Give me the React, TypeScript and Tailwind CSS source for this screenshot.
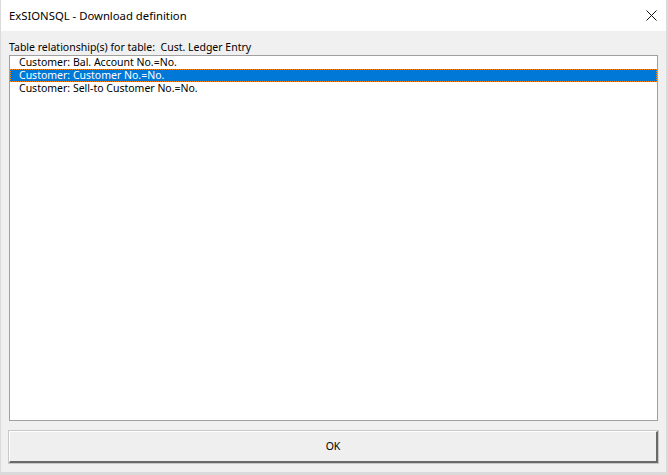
import React from 'react';

const rows = [
  'Customer: Bal. Account No.=No.',
  'Customer: Customer No.=No.',
  'Customer: Sell-to Customer No.=No.',
];

export default function App() {
  const selected = 1;

  return (
    <div
      className="w-[668px] h-[475px] flex flex-col bg-[#f0f0f0] border-l border-r-2 border-b-[3px] border-[#dadada] text-[10.5px] text-black overflow-hidden"
      style={{ fontFamily: '"Noto Sans", "Segoe UI", sans-serif' }}
    >
      {/* title bar */}
      <div className="h-[31px] shrink-0 bg-white flex items-center justify-between pl-[8px] pr-[9px]">
        <span className="text-[11.3px] leading-none pt-[1px]">ExSIONSQL - Download definition</span>
        <svg width="11" height="11" viewBox="0 0 11 11">
          <path d="M0.5 0.5 L10.5 10.5 M10.5 0.5 L0.5 10.5" stroke="#111" strokeWidth="1" />
        </svg>
      </div>

      <div className="flex-1 flex flex-col px-[8px] pt-[8px] pb-[9px]">
        <div className="h-[16px] leading-[16px] whitespace-pre">
          Table relationship(s) for table:  Cust. Ledger Entry
        </div>

        {/* relationship list */}
        <div className="h-[366px] bg-white border border-[#a0a0a0]">
          {rows.map((r, i) => (
            <div
              key={r}
              className={
                i === selected
                  ? 'h-[13px] leading-[11px] pl-[8px] bg-[#0078d7] text-white border border-dotted border-[#ff8a00]'
                  : 'h-[13px] leading-[13px] pl-[9px]'
              }
            >
              {r}
            </div>
          ))}
        </div>

        <button className="mt-[10px] h-[32px] bg-[#efefef] border-t border-l border-white border-r-2 border-b-2 border-r-[#696969] border-b-[#696969] outline outline-1 outline-[#c8c8c8] text-[10.5px]">
          OK
        </button>
      </div>
    </div>
  );
}
